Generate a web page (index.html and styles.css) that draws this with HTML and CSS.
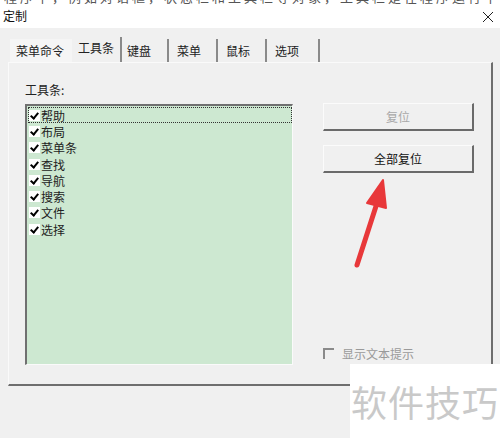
FILE: index.html
```html
<!DOCTYPE html>
<html lang="zh">
<head>
<meta charset="utf-8">
<title>定制</title>
<link rel="stylesheet" href="styles.css">
</head>
<body>
<div class="strip"><span class="strip-text">程序中，例如对话框，状态栏和工具栏等对象，工具栏是在程序运行中</span></div>
<div class="titlebar">
  <span class="title">定制</span>
  <span class="close">
    <svg width="12" height="12" viewBox="0 0 12 12"><path d="M1 1L11 11M11 1L1 11" stroke="#222" stroke-width="1" fill="none"/></svg>
  </span>
</div>
<div class="body">
  <div class="tabs">
    <div class="tab first">菜单命令</div>
    <div class="tab active">工具条</div>
    <div class="tab">键盘</div>
    <div class="tab">菜单</div>
    <div class="tab">鼠标</div>
    <div class="tab">选项</div>
  </div>
  <div class="panel">
    <div class="left">
      <div class="label">工具条:</div>
      <div class="listbox">
        <div class="item focus"><span class="cb"></span>帮助</div>
        <div class="item"><span class="cb"></span>布局</div>
        <div class="item"><span class="cb"></span>菜单条</div>
        <div class="item"><span class="cb"></span>查找</div>
        <div class="item"><span class="cb"></span>导航</div>
        <div class="item"><span class="cb"></span>搜索</div>
        <div class="item"><span class="cb"></span>文件</div>
        <div class="item"><span class="cb"></span>选择</div>
      </div>
    </div>
    <div class="right">
      <div class="btn disabled">复位</div>
      <div class="btn">全部复位</div>
      <div class="option"><span class="cb-off"></span>显示文本提示</div>
    </div>
  </div>
</div>
<svg class="arrow" width="60" height="110" viewBox="0 0 60 110">
  <path d="M17 95 L38 30" stroke="#e8383a" stroke-width="5" stroke-linecap="round" fill="none"/>
  <path d="M43 10 L27 33 L46 38 Z" fill="#e8383a" stroke="#e8383a" stroke-width="2" stroke-linejoin="round"/>
</svg>
<div class="watermark">软件技巧</div>
</body>
</html>
```
FILE: styles.css
```css
* { box-sizing: border-box; }
html, body { margin: 0; padding: 0; }
body {
  width: 500px;
  height: 438px;
  overflow: hidden;
  position: relative;
  background: #f0f0f0;
  font-family: "Noto Sans CJK SC", "Noto Sans", sans-serif;
  font-size: 12px;
  color: #1a1a1a;
}
.strip {
  height: 5px;
  overflow: hidden;
  background: #fff;
  padding-left: 4px;
}
.strip-text {
  display: block;
  margin-top: -10px;
  font-size: 13px;
  line-height: 14px;
  color: #555;
  white-space: nowrap;
  letter-spacing: 3px;
}
.titlebar {
  height: 23px;
  background: #fff;
  display: flex;
  align-items: center;
  justify-content: space-between;
  padding: 0 6px 2px 3px;
}
.title { font-size: 12px; line-height: 14px; color: #111; }
.close { display: flex; margin-top: 2px; }
.body { padding: 9px 0 0 0; }
.tabs {
  display: flex;
  align-items: flex-end;
  height: 25px;
  padding-left: 10px;
}
.tab {
  height: 23px;
  padding: 0 0 0 6px;
  line-height: 24px;
  border-right: 2px solid #8a8a8a;
  margin-right: 2px;
  color: #222;
}
.tab.first { width: 62px; border-right: none; background: #f5f5f5; margin-right: 1px; }
.tab.active { width: 49px; height: 25px; line-height: 22px; padding-left: 5px; background: #f0f0f0; }
.tab:nth-child(3) { width: 45px; padding-left: 3px; }
.tab:nth-child(4) { width: 47px; }
.tab:nth-child(5) { width: 47px; }
.tab:nth-child(6) { width: 51px; }
.panel {
  margin: 0 7px 0 8px;
  height: 324px;
  border-top: 1px solid #fafafa;
  border-left: 1px solid #fafafa;
  border-right: 2px solid #6e6e6e;
  border-bottom: 2px solid #6e6e6e;
  display: flex;
  padding: 20px 0 19px 16px;
  gap: 30px;
}
.left { display: flex; flex-direction: column; }
.label { height: 21px; line-height: 14px; color: #222; }
.listbox {
  width: 268px;
  flex: 1;
  background: #cde8d1;
  border-left: 2px solid #707070;
  border-top: 2px solid #707070;
  border-right: 1px solid #fafafa;
  border-bottom: 1px solid #fafafa;
  padding: 1px 0 0 1px;
}
.item {
  height: 16.3px;
  display: flex;
  align-items: center;
  font-size: 12px;
  color: #222;
}
.item.focus { outline: 1px dotted #333; outline-offset: -1px; }
.cb {
  width: 11px;
  height: 11px;
  margin: 0 1px 0 1px;
  background: #fff;
  position: relative;
}
.cb::after {
  content: "";
  position: absolute;
  left: 3px;
  top: 1px;
  width: 3px;
  height: 6px;
  border-right: 2px solid #000;
  border-bottom: 2px solid #000;
  transform: rotate(40deg);
}
.right {
  width: 151px;
  display: flex;
  flex-direction: column;
  padding-top: 20px;
}
.btn {
  height: 28px;
  margin-bottom: 14px;
  border-top: 1px solid #fbfbfb;
  border-left: 1px solid #fbfbfb;
  border-right: 2px solid #6a6a6a;
  border-bottom: 2px solid #6a6a6a;
  background: #f0f0f0;
  display: flex;
  align-items: center;
  justify-content: center;
  color: #111;
}
.btn.disabled { color: #a8a8a8; }
.option {
  margin-top: auto;
  display: flex;
  align-items: center;
  color: #9a9a9a;
  height: 14px;
  margin-bottom: 5px;
}
.cb-off {
  width: 11px;
  height: 11px;
  border-top: 2px solid #8a8a8a;
  border-left: 2px solid #8a8a8a;
  margin-right: 8px;
}
.arrow {
  position: absolute;
  left: 340px;
  top: 170px;
}
.watermark {
  position: absolute;
  left: 350px;
  top: 364px;
  width: 150px;
  height: 74px;
  background: #fff;
  color: #c9c9c9;
  font-size: 36px;
  line-height: 74px;
  text-align: center;
  letter-spacing: 1px;
}
```
